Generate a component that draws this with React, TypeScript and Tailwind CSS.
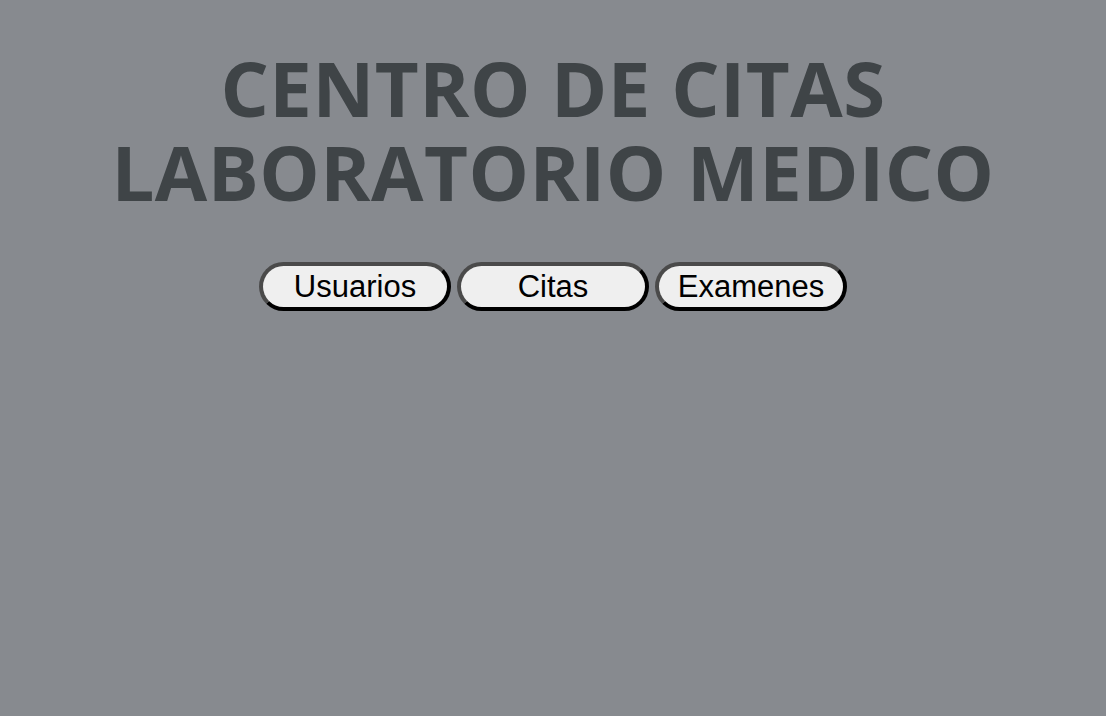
export default function App() {
  const items = ["Usuarios", "Citas", "Examenes"];
  return (
    <div className="min-h-[716px] w-full bg-[#878a8f] pt-[46px]">
      <h1 className="text-center font-['Open_Sans',sans-serif] text-[76px] font-bold uppercase leading-[84px] tracking-[0.5px] text-[#3f4447]">
        Centro de citas
        <br />
        Laboratorio medico
      </h1>
      <div className="mt-[48px] flex justify-center gap-[6px]">
        {items.map((item) => (
          <button
            key={item}
            className="h-[49px] w-[192px] rounded-full border-[4px] border-t-[#4a4a4a] border-l-[#4a4a4a] border-r-black border-b-black bg-[#efefef] font-['Liberation_Sans',Arial,sans-serif] text-[31px] leading-none text-black"
          >
            {item}
          </button>
        ))}
      </div>
    </div>
  );
}
